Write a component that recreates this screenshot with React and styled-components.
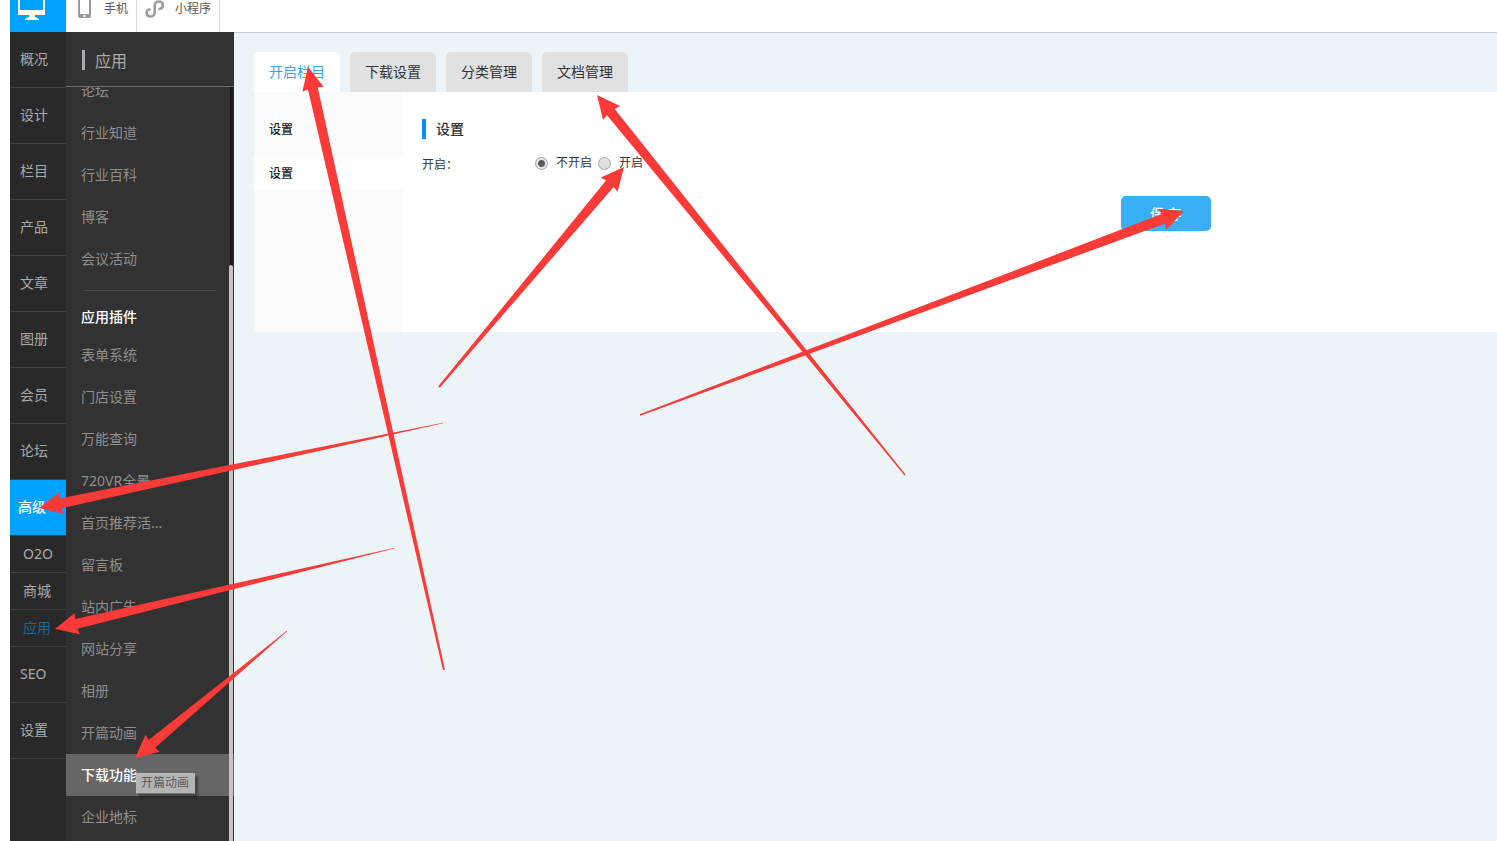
import React, { useState } from 'react';
import styled, { createGlobalStyle } from 'styled-components';

const GlobalStyle = createGlobalStyle`
  * {
    box-sizing: border-box;
  }

  body {
    margin: 0;
    background: #fff;
    font-family: "Noto Sans", "Noto Sans CJK SC", sans-serif;
    font-size: 14px;
    color: #333;
  }

  a {
    color: inherit;
    text-decoration: none;
  }

  button, input {
    font: inherit;
  }
`;

const Page = styled.div`
  position: relative;
  display: flex;
  flex-direction: column;
  height: 100vh;
  padding-left: 10px;
  overflow: hidden;
`;

const TopBar = styled.header`
  display: flex;
  flex: none;
  height: 32px;
`;

const HomeLink = styled.a`
  display: flex;
  align-items: flex-end;
  width: 56px;
  padding: 0 0 12px 8px;
  background: #00a2ff;
  overflow: hidden;

  svg {
    flex: none;
  }
`;

const Platform = styled.a`
  display: flex;
  align-items: flex-end;
  gap: ${props => props.$gap};
  padding: 0 8px 0 ${props => props.$left};
  border-right: 1px solid #d9d9d9;
  color: #555;
  font-size: 12px;
  overflow: hidden;

  svg {
    flex: none;
    margin-bottom: 14px;
  }

  span {
    line-height: 16px;
    margin-bottom: 15px;
  }
`;

const Body = styled.div`
  display: flex;
  flex: 1;
  min-height: 0;
`;

const MainNav = styled.nav`
  flex: none;
  width: 56px;
  background: #292929;
  color: #a9a9a9;
`;

const NavItem = styled.a`
  display: block;
  height: 56px;
  padding-left: ${props => (props.$active ? '8px' : '10px')};
  border-bottom: 1px solid #404040;
  line-height: 54px;
  background: ${props => (props.$active ? '#00a2ff' : 'transparent')};
  color: ${props => (props.$active ? '#fff' : 'inherit')};
  font-weight: ${props => (props.$active ? '500' : 'normal')};
`;

const SubItem = styled.a`
  display: block;
  height: 37px;
  padding-left: 13px;
  border-bottom: 1px solid #404040;
  line-height: 36px;
  color: ${props => (props.$active ? '#1c6899' : 'inherit')};
`;

const AppNav = styled.nav`
  display: flex;
  flex: none;
  flex-direction: column;
  width: 168px;
  background: #323232;
  color: #8e8e8e;
`;

const AppTitle = styled.div`
  display: flex;
  flex: none;
  align-items: center;
  gap: 10px;
  height: 55px;
  padding: 1px 0 0 16px;
  border-bottom: 1px solid #6b6b6b;
  color: #aaa;
  font-size: 16px;

  &::before {
    content: "";
    width: 3px;
    height: 20px;
    background: #a9a9b3;
  }
`;

const AppScroll = styled.div`
  position: relative;
  flex: 1;
  min-height: 0;
  overflow: hidden;
`;

const AppList = styled.div`
  margin-top: -17px;
`;

const AppItem = styled.a`
  display: block;
  height: 42px;
  padding-left: 15px;
  line-height: 42px;
  background: ${props => (props.$active ? '#666' : 'transparent')};
  color: ${props => (props.$active ? '#fff' : 'inherit')};
  font-weight: ${props => (props.$active ? '500' : 'normal')};
`;

const Divider = styled.hr`
  height: 1px;
  margin: 10px 18px 0;
  border: 0;
  background: #4d4d4d;
`;

const GroupTitle = styled.div`
  padding: 10px 0 2px 15px;
  line-height: 31px;
  color: #fff;
  font-weight: 500;
`;

const ScrollTrack = styled.div`
  position: absolute;
  top: 0;
  right: 1px;
  bottom: 0;
  width: 4px;
  padding-top: 178px;
  background: linear-gradient(to right, #323232 1px, #1f1b1c 1px);
`;

const ScrollThumb = styled.div`
  height: 100%;
  border-radius: 2px 2px 0 0;
  background: #c8c4c4;
`;

const Tooltip = styled.div`
  position: absolute;
  left: 70px;
  top: 686px;
  padding: 0 5px 1px 4px;
  border: 1px solid #b9b9b9;
  border-bottom-color: #777;
  background: #b4b4b4;
  box-shadow: 3px 3px 2px rgba(0, 0, 0, 0.35);
  color: #5c5c5c;
  font-size: 12px;
  line-height: 18px;
`;

const Main = styled.main`
  flex: 1;
  min-width: 0;
  padding: 19px 0 0 20px;
  border-top: 1px solid #c3cdd2;
  background: #ecf4f8;
`;

const Tabs = styled.div`
  display: flex;
  gap: 10px;
`;

const Tab = styled.button`
  height: 40px;
  padding: 0 15px;
  border: 0;
  border-radius: 5px 5px 0 0;
  background: ${props => (props.$active ? '#fff' : '#e1e1e1')};
  color: ${props => (props.$active ? '#2fa9f5' : '#333')};
  line-height: 40px;
  cursor: pointer;
`;

const Panel = styled.section`
  display: flex;
  min-height: 240px;
  background: #fff;
`;

const SideMenu = styled.div`
  flex: none;
  width: 148px;
  padding-top: 22px;
  background: #fafafa;
  color: #222;
  font-size: 12px;
  font-weight: 500;
`;

const SideTitle = styled.div`
  height: 43px;
  padding-left: 15px;
  line-height: 32px;
`;

const SideLink = styled.a`
  display: block;
  padding: 2px 0 0 15px;
  background: #fff;
  line-height: 30px;
`;

const Form = styled.form`
  flex: 1;
  padding: 27px 0 0 20px;
`;

const FormTitle = styled.h2`
  margin: 0;
  padding-left: 10px;
  border-left: 4px solid #0090ff;
  color: #333;
  font-size: 14px;
  font-weight: 500;
  line-height: 20px;
`;

const Field = styled.div`
  display: flex;
  align-items: flex-start;
  height: 24px;
  margin-top: 14px;
  font-size: 12px;
  line-height: 20px;
`;

const FieldLabel = styled.div`
  width: 113px;
  padding-top: 2px;
`;

const Option = styled.label`
  display: flex;
  align-items: center;
  gap: 8px;
  margin-right: 6px;
`;

const Radio = styled.input`
  appearance: none;
  width: 13px;
  height: 13px;
  margin: 0;
  border: 1px solid #a2a2a2;
  border-radius: 50%;
  background: linear-gradient(#e2e2e2, #dcdcdc);

  &:checked {
    background: radial-gradient(circle, #5a5a5a 3px, #e6e6e6 4px);
  }
`;

const SaveButton = styled.button`
  display: block;
  width: 90px;
  height: 35px;
  margin: 19px 0 0 65%;
  padding: 0 0 2px;
  border: 0;
  border-radius: 5px;
  background: #39aff5;
  color: #fff;
  font-weight: 500;
  cursor: pointer;
`;

const Arrows = styled.svg`
  position: absolute;
  inset: 0;
  width: 100%;
  height: 100%;
  pointer-events: none;
`;

const navTop = ['概况', '设计', '栏目', '产品', '文章', '图册', '会员', '论坛'];
const subNav = ['O2O', '商城', '应用'];
const apps = ['论坛', '行业知道', '行业百科', '博客', '会议活动'];
const plugins = [
  '表单系统', '门店设置', '万能查询', '720VR全景', '首页推荐活...', '留言板',
  '站内广告', '网站分享', '相册', '开篇动画', '下载功能', '企业地标',
];
const tabs = ['开启栏目', '下载设置', '分类管理', '文档管理'];

// from = thin end, to = tip of the head
const arrows = [
  { from: [444, 670], to: [308, 67], tail: 1 },
  { from: [905, 475], to: [597, 95], tail: 0.6 },
  { from: [640, 415], to: [1184, 211], tail: 0.8 },
  { from: [439, 387], to: [624, 167], tail: 1 },
  { from: [443, 423], to: [39, 508], tail: 0.2 },
  { from: [395, 548], to: [55, 629], tail: 0.2 },
  { from: [287, 631], to: [135, 758], tail: 0.3 },
];

const arrowPoints = ({ from, to, tail }) => {
  const length = Math.hypot(to[0] - from[0], to[1] - from[1]);
  const dx = (to[0] - from[0]) / length;
  const dy = (to[1] - from[1]) / length;
  const at = (back, side) => [to[0] - dx * back - dy * side, to[1] - dy * back + dx * side].join(',');
  return [
    at(length, tail), at(22, 5), at(23, 11), at(0, 0),
    at(23, -11), at(22, -5), at(length, -tail),
  ].join(' ');
};

const App = () => {
  const [tab, setTab] = useState('开启栏目');
  const [enabled, setEnabled] = useState(false);

  return (
    <Page>
      <GlobalStyle />
      <TopBar>
        <HomeLink href="#" aria-label="电脑">
          <svg width="28" height="26" viewBox="0 0 28 26">
            <path d="M0 0H27V21H0Z M2 2V16H25V2Z" fill="#fff" fillRule="evenodd" />
            <path d="M11 21H17V23L21 25V26H7V25L11 23Z" fill="#fff" />
          </svg>
        </HomeLink>
        <Platform href="#" $left="12px" $gap="13px">
          <svg width="13" height="22" viewBox="0 0 13 22">
            <path d="M2 0H11Q13 0 13 2V20Q13 22 11 22H2Q0 22 0 20V2Q0 0 2 0Z M2 3V18H11V3Z" fill="#999" fillRule="evenodd" />
            <circle cx="6.5" cy="20" r="1.2" fill="#fff" />
          </svg>
          <span>手机</span>
        </Platform>
        <Platform href="#" $left="8px" $gap="10px">
          <svg width="20" height="18" viewBox="0 0 20 18">
            <path
              d="M14.5 9C19 8 19 1.5 14 1.5C11 1.5 9.7 3.5 9.7 6V12C9.7 15 8 16.5 5.5 16.5C0.5 16.5 0.5 10 4.5 9.5"
              fill="none"
              stroke="#a0a0a0"
              strokeWidth="2.6"
              strokeLinecap="round"
            />
          </svg>
          <span>小程序</span>
        </Platform>
      </TopBar>

      <Body>
        <MainNav>
          {navTop.map(name => <NavItem href="#" key={name}>{name}</NavItem>)}
          <NavItem href="#" $active>高级</NavItem>
          {subNav.map(name => <SubItem href="#" key={name} $active={name === '应用'}>{name}</SubItem>)}
          <NavItem href="#">SEO</NavItem>
          <NavItem href="#">设置</NavItem>
        </MainNav>

        <AppNav>
          <AppTitle>应用</AppTitle>
          <AppScroll>
            <AppList>
              {apps.map(name => <AppItem href="#" key={name}>{name}</AppItem>)}
              <Divider />
              <GroupTitle>应用插件</GroupTitle>
              {plugins.map(name => (
                <AppItem href="#" key={name} $active={name === '下载功能'}>{name}</AppItem>
              ))}
            </AppList>
            <ScrollTrack><ScrollThumb /></ScrollTrack>
            <Tooltip role="tooltip">开篇动画</Tooltip>
          </AppScroll>
        </AppNav>

        <Main>
          <Tabs>
            {tabs.map(name => (
              <Tab key={name} type="button" $active={tab === name} onClick={() => setTab(name)}>{name}</Tab>
            ))}
          </Tabs>
          <Panel>
            <SideMenu>
              <SideTitle>设置</SideTitle>
              <SideLink href="#">设置</SideLink>
            </SideMenu>
            <Form onSubmit={e => e.preventDefault()}>
              <FormTitle>设置</FormTitle>
              <Field role="radiogroup" aria-labelledby="open-label">
                <FieldLabel id="open-label">开启：</FieldLabel>
                <Option>
                  <Radio type="radio" name="open" checked={!enabled} onChange={() => setEnabled(false)} />
                  不开启
                </Option>
                <Option>
                  <Radio type="radio" name="open" checked={enabled} onChange={() => setEnabled(true)} />
                  开启
                </Option>
              </Field>
              <SaveButton type="submit">保 存</SaveButton>
            </Form>
          </Panel>
        </Main>
      </Body>

      <Arrows aria-hidden="true">
        {arrows.map(arrow => (
          <polygon key={arrow.to.join()} points={arrowPoints(arrow)} fill="#fc3a38" />
        ))}
      </Arrows>
    </Page>
  );
};

export default App;
